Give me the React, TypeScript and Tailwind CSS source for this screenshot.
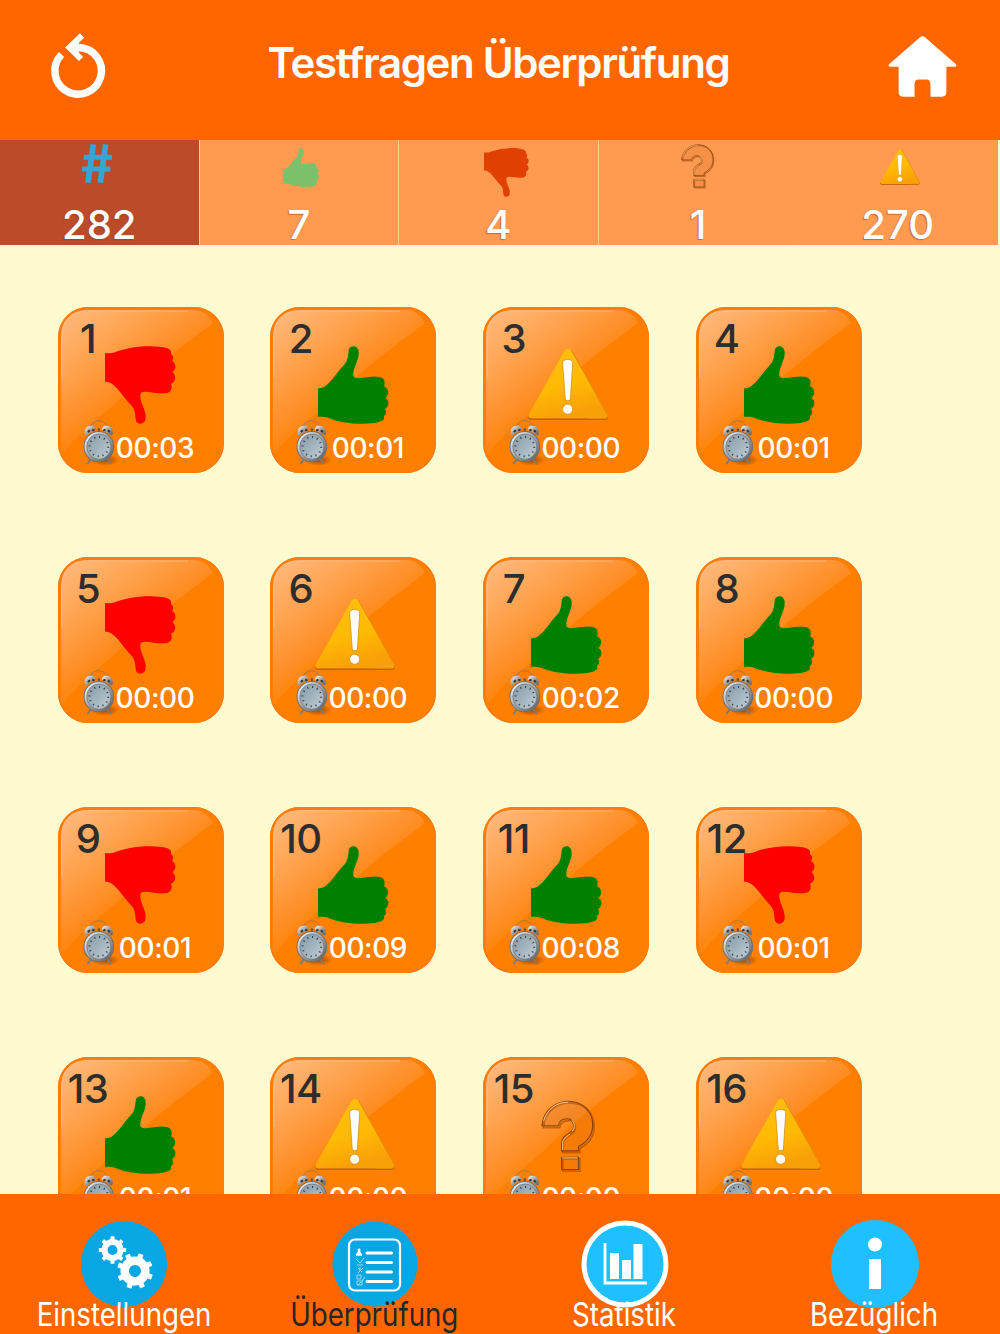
import { clsx } from "clsx";
import { useId } from "react";

type Result = "up" | "down" | "warn" | "ask";

const QUESTIONS: { result: Result; time: string }[] = [
  { result: "down", time: "00:03" },
  { result: "up", time: "00:01" },
  { result: "warn", time: "00:00" },
  { result: "up", time: "00:01" },
  { result: "down", time: "00:00" },
  { result: "warn", time: "00:00" },
  { result: "up", time: "00:02" },
  { result: "up", time: "00:00" },
  { result: "down", time: "00:01" },
  { result: "up", time: "00:09" },
  { result: "up", time: "00:08" },
  { result: "down", time: "00:01" },
  { result: "up", time: "00:01" },
  { result: "warn", time: "00:00" },
  { result: "ask", time: "00:00" },
  { result: "warn", time: "00:00" },
];

function Thumb({ className }: { className?: string }) {
  return (
    <svg viewBox="0 0 213 235" preserveAspectRatio="none" fill="currentColor" className={className}>
      <path d="M0 128L12 126C35 118 55 80 80 55C92 42 90 22 93 10C98-4 121-2 122 18C124 44 104 64 106 88C107 95 112 97 120 97C142 96 168 89 188 94C201 98 202 112 198 121C213 127 215 146 202 157C215 163 214 183 201 190C208 200 203 207 198 211C201 224 190 229 170 232C120 239 60 230 30 216C20 212 10 213 0 213Z" />
    </svg>
  );
}

function Warning({ className }: { className?: string }) {
  const id = useId();
  return (
    <svg viewBox="0 0 240 218" className={className}>
      <defs>
        <linearGradient id={id} x1="0" y1="0" x2="0.3" y2="1">
          <stop offset="0" stopColor="#ffbe10" />
          <stop offset="0.6" stopColor="#ffba05" />
          <stop offset="1" stopColor="#f9a008" />
        </linearGradient>
      </defs>
      <path d="M110 8Q120-2 130 8L238 202Q243 214 230 215H10Q-3 214 2 202Z" fill="#b85a00" />
      <path d="M110 6Q120-3 130 6L238 199Q242 210 230 211H10Q-2 210 2 199Z" fill={`url(#${id})`} />
      <path d="M130 6L238 199Q242 210 230 211H180" fill="none" stroke="#e28c00" strokeWidth="3" />
      <path d="M104 45Q104 34 119 34Q134 34 134 45L127 155Q119 160 112 155Z" fill="#fff" stroke="#c98500" strokeWidth="2" />
      <circle cx="119" cy="183" r="15" fill="#fff" stroke="#c98500" strokeWidth="2" />
    </svg>
  );
}

const ASK = "M3 77C6 30 45 3 82 3C128 3 156 35 156 74C156 108 140 126 113 140V153H62V130C62 110 77 106 94 92C104 84 99 56 80 56C62 56 54 64 52 77ZM62 172H113V209H62Z";

function Ask({ className }: { className?: string }) {
  return (
    <svg viewBox="0 0 166 219" className={className}>
      <path d={ASK} transform="translate(4 5)" fill="none" stroke="#a04a00" strokeWidth="6" opacity="0.6" />
      <path d={ASK} fill="#c96a28" fillOpacity="0.2" stroke="#874610" strokeWidth="3.5" />
      <path d="M8 62C20 24 48 6 82 6M94 93C104 84 101 66 92 60M65 150V130C65 118 76 110 87 103M64 174H110" fill="none" stroke="#ffd2a0" strokeWidth="2.5" />
    </svg>
  );
}

function AlarmClock({ className }: { className?: string }) {
  const id = useId();
  return (
    <svg viewBox="0 0 110 138" className={className}>
      <defs>
        <linearGradient id={id} x1="0" y1="0" x2="1" y2="1">
          <stop offset="0" stopColor="#fff" />
          <stop offset="0.45" stopColor="#a9aaab" />
          <stop offset="1" stopColor="#55585c" />
        </linearGradient>
        <linearGradient id={`${id}f`} x1="0" y1="0" x2="1" y2="1">
          <stop offset="0" stopColor="#8397a4" />
          <stop offset="1" stopColor="#c3d0d8" />
        </linearGradient>
        <radialGradient id={`${id}s`}>
          <stop offset="0" stopColor="#7a3800" stopOpacity="0.75" />
          <stop offset="1" stopColor="#7a3800" stopOpacity="0" />
        </radialGradient>
      </defs>
      <ellipse cx="66" cy="120" rx="44" ry="18" fill={`url(#${id}s)`} />
      <path d="M22 20C25-3 66-4 70 20" fill="none" stroke="#98785c" strokeWidth="3" />
      <path d="M5 44C0 22 18 14 32 19L38 28L9 46Z" fill={`url(#${id})`} />
      <path d="M88 44C93 22 75 14 61 19L55 28L84 46Z" fill={`url(#${id})`} />
      <path d="M14 36L20 31M27 29l7 3M60 32l7-3M74 31l6 5" stroke="#37332f" strokeWidth="6" />
      <circle cx="47" cy="29" r="4" fill="#62574e" />
      <path d="M24 117L14 130M72 117L82 130" stroke="#817a74" strokeWidth="6" strokeLinecap="round" />
      <ellipse cx="47" cy="80" rx="46" ry="47" fill="#6d6f71" />
      <ellipse cx="47" cy="80" rx="43" ry="44" fill={`url(#${id})`} />
      <ellipse cx="47" cy="80" rx="36" ry="38" fill={`url(#${id}f)`} stroke="#6b7175" strokeWidth="2" />
      <ellipse cx="47" cy="80" rx="28" ry="29" fill="none" stroke="#3c464e" strokeWidth="6" strokeDasharray="3.5 11.4" />
    </svg>
  );
}

/* glossy orange background of a question tile */
function Gloss() {
  const id = useId();
  return (
    <svg viewBox="0 0 166 166" className="col-start-1 row-start-1 size-full">
      <defs>
        <linearGradient id={id} gradientUnits="userSpaceOnUse" x1="10" y1="5" x2="86" y2="105">
          <stop offset="0" stopColor="#ffb97c" />
          <stop offset="0.4" stopColor="#ffa24d" />
          <stop offset="0.7" stopColor="#ff8f28" />
          <stop offset="0.95" stopColor="#ff8000" />
        </linearGradient>
      </defs>
      <rect width="166" height="166" rx="30" fill="#ff8000" />
      <path d="M3 150V31Q3 3 31 3H135Q148 3 155 16L118 44C98 60 78 76 58 96C38 114 18 128 3 150Z" fill={`url(#${id})`} />
      <path d="M4 70V31Q4 4 31 4H130" fill="none" stroke="#ffc08c" strokeWidth="2" opacity="0.35" />
      <rect x="1" y="1" width="164" height="164" rx="29" fill="none" stroke="#ff7b0c" strokeWidth="2" />
    </svg>
  );
}

function ResultIcon({ result }: { result: Result }) {
  if (result === "up") return <Thumb className="ml-[47.5px] mt-[39px] h-[78px] w-[71px] text-[#008000]" />;
  if (result === "down") return <Thumb className="ml-[47.5px] mt-[39px] h-[78px] w-[71px] -scale-y-100 text-[#ff0000]" />;
  if (result === "warn") return <Warning className="ml-[45px] mt-[41px] h-[73px] w-20" />;
  return <Ask className="ml-[58px] mt-[43px] h-[73px] w-[55px]" />;
}

function Tile({ number, result, time }: { number: number; result: Result; time: string }) {
  return (
    <div className="grid size-[166px]">
      <Gloss />
      <div className="col-start-1 row-start-1">
        <ResultIcon result={result} />
      </div>
      <span className="col-start-1 row-start-1 mt-3 w-[61px] text-center text-[40px] leading-10 font-medium tracking-[-0.6px] text-[#2d2d2d]">
        {number}
      </span>
      <div className="col-start-1 row-start-1 flex items-end self-end pb-[7px] pl-[25.5px]">
        <AlarmClock className="h-[46px] w-[37px] shrink-0" />
        <span className="-ml-[7px] w-[84px] text-center text-[28px] leading-9 font-medium tracking-[-0.4px] text-white">{time}</span>
      </div>
    </div>
  );
}

const STATS = [
  { value: 282, icon: <Hash /> },
  { value: 7, icon: <Thumb className="ml-1 mt-2 h-[39px] w-9 text-[#7bc06b]" /> },
  { value: 4, icon: <Thumb className="ml-4 mt-2 h-[49px] w-[45px] -scale-y-100 text-[#e23f03]" /> },
  { value: 1, icon: <Ask className="mt-1 h-[45px] w-[34px]" /> },
  { value: 270, icon: <Warning className="ml-1 mt-2 h-[38px] w-10" /> },
];

function Hash() {
  return (
    <svg viewBox="0 0 90 117" className="mr-1 mt-1 h-[39px] w-[30px]" fill="none" stroke="#35a5d3">
      <path d="M34 1L18 116M71 1L55 116" strokeWidth="17" />
      <path d="M5 40H90M0 75H85" strokeWidth="15" />
    </svg>
  );
}

function RestartIcon() {
  return (
    <svg viewBox="0 0 54 65" className="mt-[33px] h-[65px] w-[54px] overflow-visible" fill="none" stroke="#fff">
      <path d="M10.500 21.500A23.300 23.300 0 1 0 28 14.500" strokeWidth="7.500" />
      <path d="M31 2.500L18.500 14.500L30 26" strokeWidth="6" />
      <path d="M14.500 14.500L28 3V25Z" fill="#fff" stroke="none" />
    </svg>
  );
}

function HomeIcon() {
  return (
    <svg viewBox="0 0 206 184" className="mt-9 h-[61px] w-[69px]" fill="#fff">
      <path d="M94 5Q103-3 112 5L204 85Q209 93 198 93H175V170Q175 183 162 183H127V145Q127 131 115 131H91Q79 131 79 145V183H44Q31 183 31 170V93H8Q-3 93 2 85Z" />
    </svg>
  );
}

function Cog({ cx, cy, r, hole, teeth, turn }: { cx: number; cy: number; r: number; hole: number; teeth: number; turn: number }) {
  return (
    <g transform={`translate(${cx} ${cy}) rotate(${turn})`}>
      {Array.from({ length: teeth }, (_, i) => (
        <rect key={i} x={-r * 0.18} y={-r * 1.24} width={r * 0.36} height={r * 0.5} rx="0.6" transform={`rotate(${(360 / teeth) * i})`} fill="#fff" />
      ))}
      <circle r={(r + hole) / 2} fill="none" stroke="#fff" strokeWidth={r - hole} />
    </g>
  );
}

function SettingsIcon() {
  return (
    <svg viewBox="0 0 88 88" className="size-[88px]">
      <circle cx="43" cy="44" r="43" fill="#08a7e4" />
      <Cog cx={31.500} cy={30} r={11} hole={5} teeth={8} turn={0} />
      <Cog cx={54} cy={51} r={14.500} hole={6} teeth={8} turn={20} />
    </svg>
  );
}

function ReviewIcon() {
  return (
    <svg viewBox="0 0 88 88" className="size-[88px]" fill="none" stroke="#fff">
      <circle cx="44" cy="44" r="42.500" fill="#08a7e4" stroke="none" />
      <rect x="18" y="19.500" width="51" height="51" rx="6" strokeWidth="2.200" />
      <path d="M36 33H60.500M36 42.500H60.500M36 52H60.500M36 61.500H60.500" strokeWidth="3" strokeLinecap="round" />
      <circle cx="28" cy="30" r="1.500" fill="#fff" stroke="none" />
      <path d="M28 31L30 34H26ZM25 35H31" strokeWidth="1.500" />
      <path d="M25 39l4 4 4-5M26 45h6M27 48l4 4M32 48l-5 5M26 55h4v4h-4zM26 61h5v4h-5zM31 61l3-4M29 47v4M27 65l5-5" strokeWidth="1" stroke="#9bd9f2" />
    </svg>
  );
}

function ChartIcon() {
  return (
    <svg viewBox="0 0 88 88" className="size-[88px]">
      <circle cx="44" cy="44" r="41" fill="#1fc0ff" stroke="#fff" strokeWidth="5" />
      <path d="M24 23V63H66" fill="none" stroke="#fff" strokeWidth="2.800" />
      <path d="M29 33h9v26h-9zM41 40h9v19h-9zM52.500 24h9v35h-9z" fill="#fff" />
    </svg>
  );
}

function InfoIcon() {
  return (
    <svg viewBox="0 0 88 88" className="size-[88px]">
      <circle cx="44" cy="44" r="44" fill="#1fc0ff" />
      <circle cx="44" cy="24.500" r="7" fill="#fff" />
      <path d="M38 39H50V69H38Z" fill="#fff" />
    </svg>
  );
}

const TABS = [
  { label: "Einstellungen", icon: <SettingsIcon /> },
  { label: "Überprüfung", icon: <ReviewIcon />, active: true },
  { label: "Statistik", icon: <ChartIcon /> },
  { label: "Bezüglich", icon: <InfoIcon /> },
];

export default function App() {
  return (
    <div className="flex h-[1334px] w-[1000px] flex-col overflow-hidden bg-[#fffbd0] font-['Inter','Liberation_Sans',sans-serif]">
      <header className="flex h-[140px] shrink-0 items-start justify-between bg-[#ff6600] pr-[43px] pl-[51px]">
        <RestartIcon />
        <h1 className="mt-[35px] ml-1 text-[42px] leading-[56px] font-semibold tracking-[-1.35px] whitespace-nowrap text-white">
          Testfragen Überprüfung
        </h1>
        <HomeIcon />
      </header>

      <div className="grid h-[105px] w-[998px] shrink-0 grid-cols-5 grid-rows-[105px]">
        {STATS.map((s, i) => (
          <div
            key={s.value}
            className={clsx(
              "flex flex-col items-center border-r",
              i === 0 ? "bg-[#bc4b29]" : "bg-[#ff9a50]",
              i < 3 ? "border-[#ffd08e]" : "border-[#ff9d55]",
            )}
          >
            <div className="flex h-[60px] shrink-0 items-start">{s.icon}</div>
            <span className="text-[40px] leading-[49px] font-medium text-white [text-shadow:-1px_1px_1px_#74421f80]">{s.value}</span>
          </div>
        ))}
      </div>

      <main className="min-h-0 flex-1 overflow-hidden pt-[62px] pl-[57.5px]">
        <div className="grid grid-cols-[repeat(4,166px)] gap-x-[46.9px] gap-y-[84px]">
          {QUESTIONS.map((q, i) => (
            <Tile key={i} number={i + 1} {...q} />
          ))}
        </div>
      </main>

      <nav className="grid h-[140px] shrink-0 grid-cols-4 bg-[#ff6600] pt-[26px]">
        {TABS.map((t) => (
          <div key={t.label} className="flex flex-col items-center">
            {t.icon}
            <span
              className={clsx(
                "z-10 -mt-[13px] mr-0.5 scale-x-[.865] text-[32px] leading-10 whitespace-nowrap",
                t.active ? "text-[#262626]" : "text-white",
              )}
            >
              {t.label}
            </span>
          </div>
        ))}
      </nav>
    </div>
  );
}
